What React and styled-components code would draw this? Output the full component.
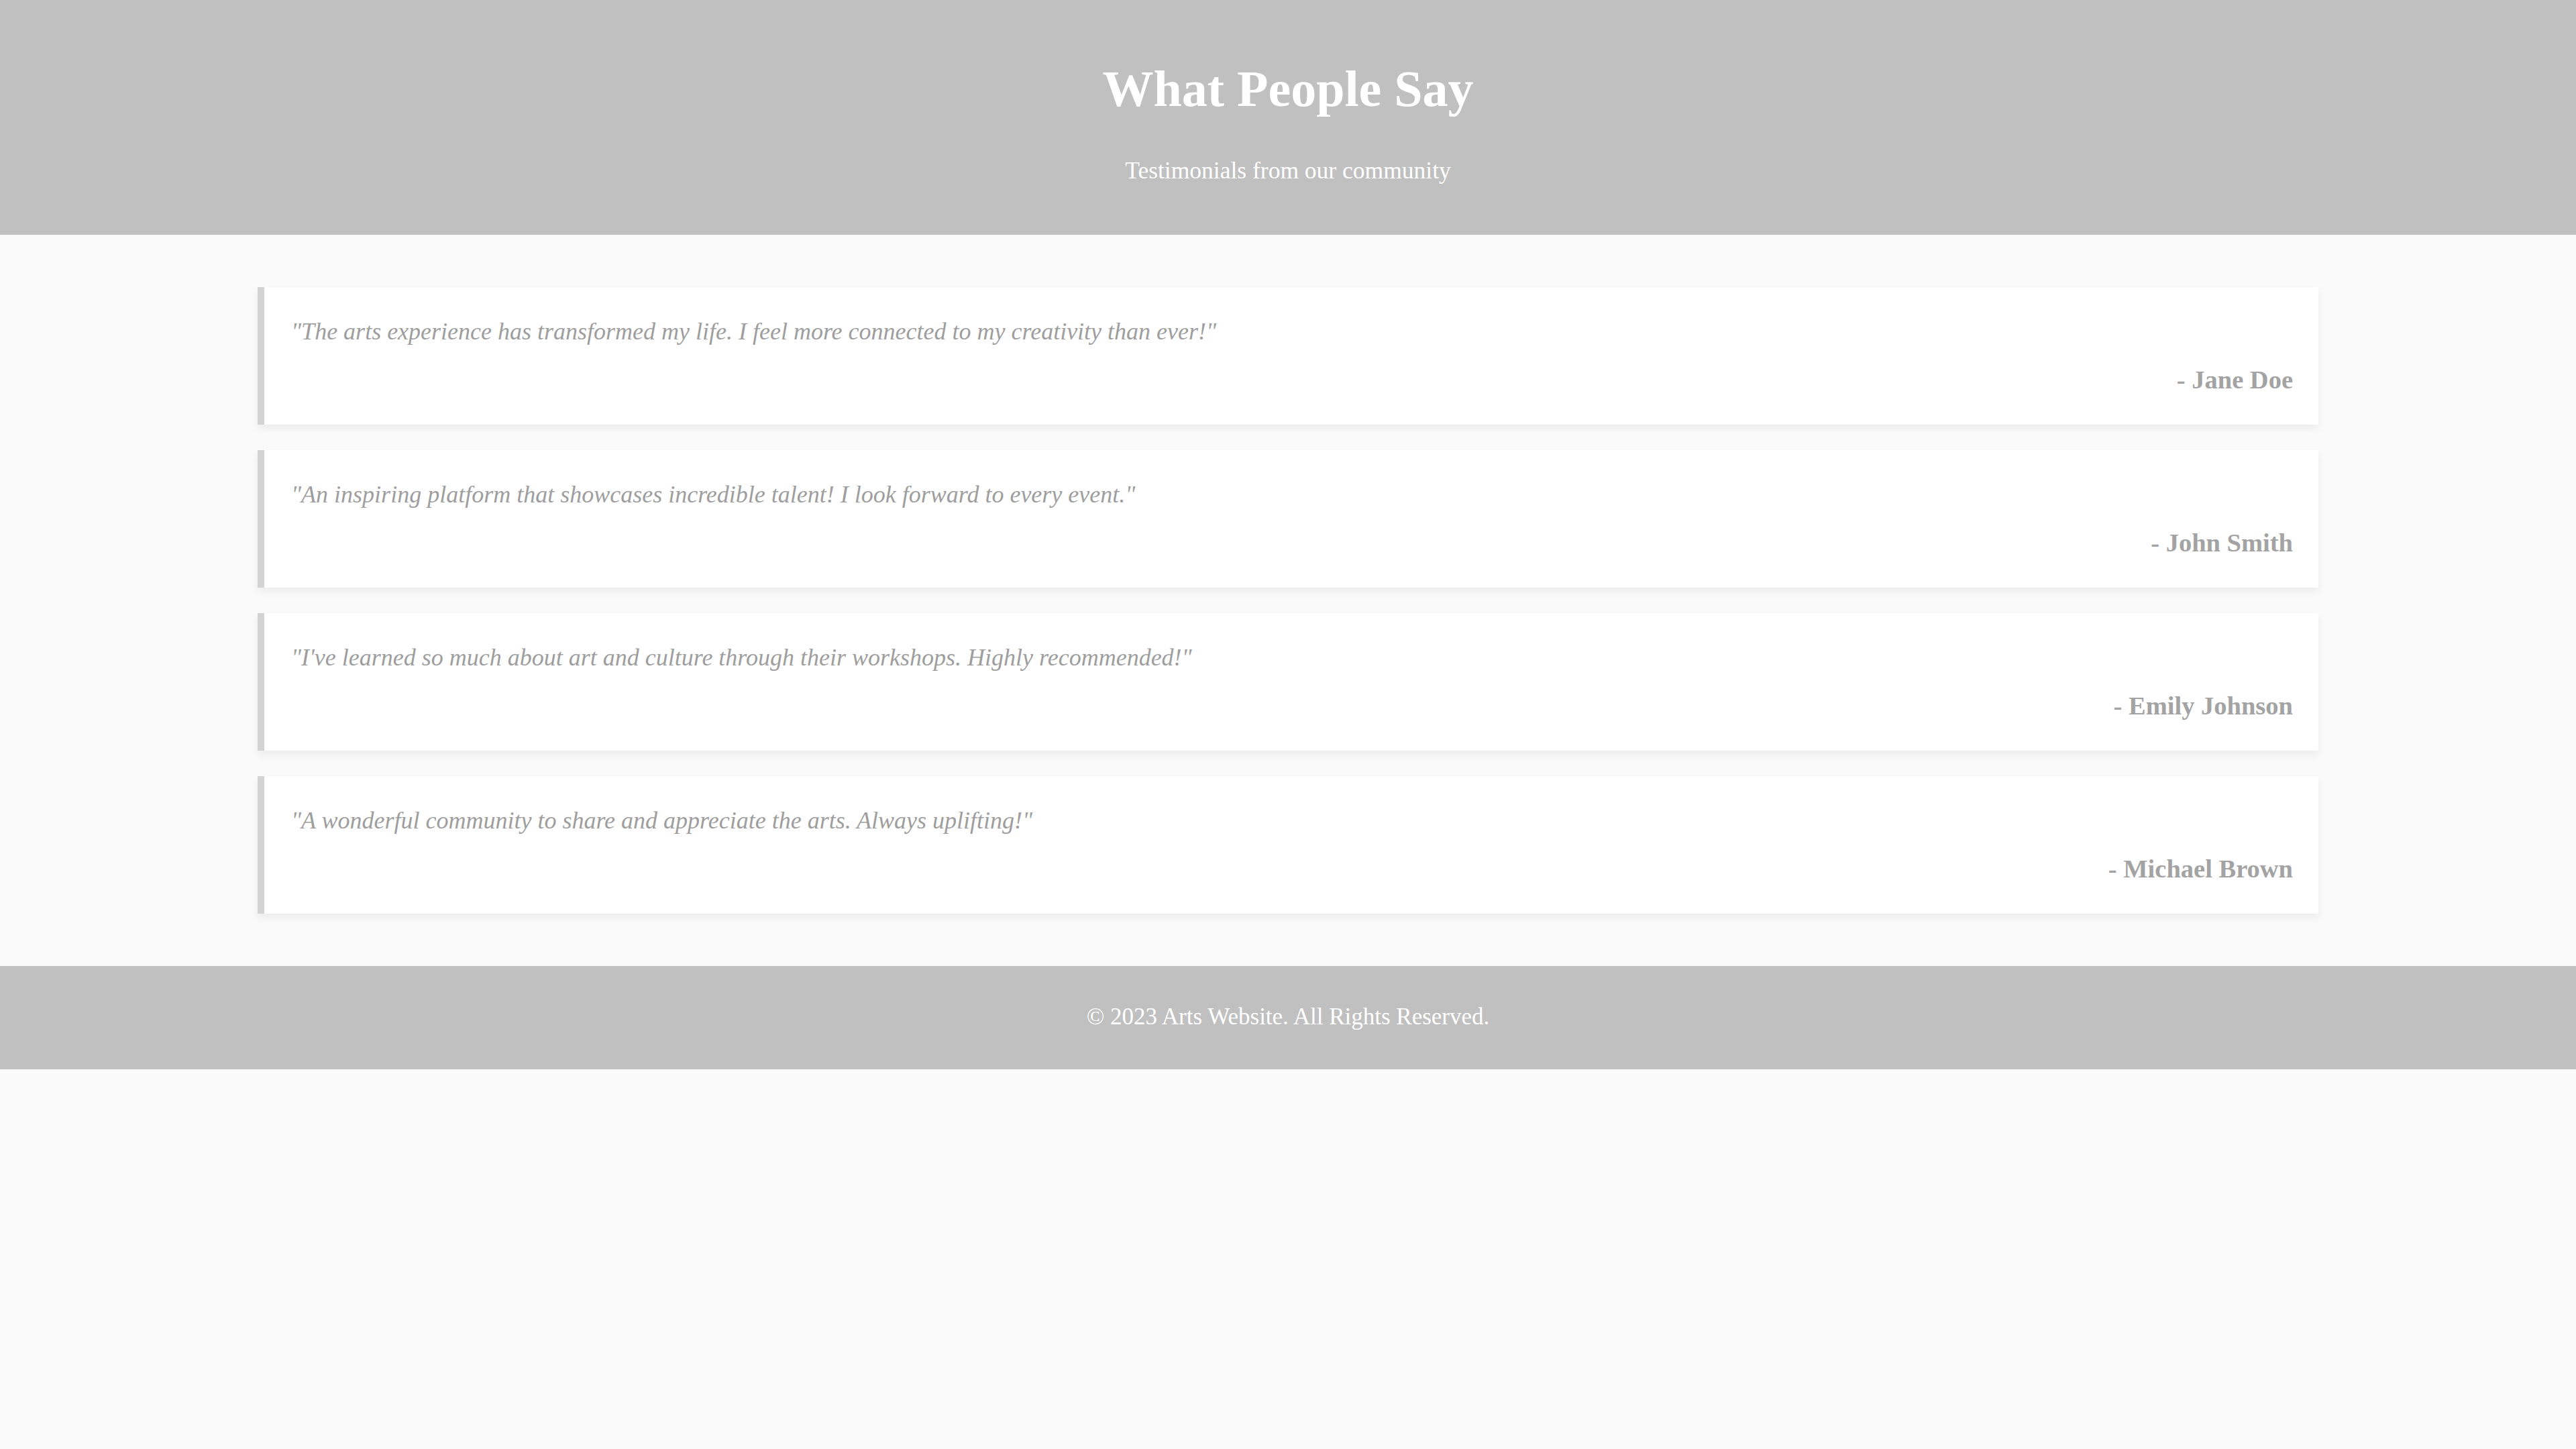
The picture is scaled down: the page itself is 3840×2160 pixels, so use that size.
import styled, { createGlobalStyle } from "styled-components";

const testimonials = [
  {
    quote: "\"The arts experience has transformed my life. I feel more connected to my creativity than ever!\"",
    author: "Jane Doe",
  },
  {
    quote: "\"An inspiring platform that showcases incredible talent! I look forward to every event.\"",
    author: "John Smith",
  },
  {
    quote: "\"I've learned so much about art and culture through their workshops. Highly recommended!\"",
    author: "Emily Johnson",
  },
  {
    quote: "\"A wonderful community to share and appreciate the arts. Always uplifting!\"",
    author: "Michael Brown",
  },
];

export default function App() {
  return (
    <>
      <GlobalStyle />
      <Header>
        <Title>What People Say</Title>
        <Subtitle>Testimonials from our community</Subtitle>
      </Header>
      <Main>
        {testimonials.map((t, i) => (
          <Card key={`testimonial-${i}`}>
            <Quote>{t.quote}</Quote>
            <Author>- {t.author}</Author>
          </Card>
        ))}
      </Main>
      <Footer>
        <FooterText>© 2023 Arts Website. All Rights Reserved.</FooterText>
      </Footer>
    </>
  );
}

const GlobalStyle = createGlobalStyle`
  html, body {
    margin: 0;
    padding: 0;
    background: #fafafa;
    font-family: "Liberation Serif", "DejaVu Serif", serif;
  }
`;

const Header = styled.header`
  background: #c0c0c0;
  color: #ffffff;
  text-align: center;
  padding: 89px 0 76px;
  display: flex;
  flex-direction: column;
  align-items: center;
`;

const Title = styled.h1`
  margin: 0;
  font-size: 76px;
  line-height: 87px;
  font-weight: bold;
`;

const Subtitle = styled.p`
  margin: 58px 0 0;
  font-size: 35.5px;
  line-height: 40px;
`;

const Main = styled.main`
  padding: 78px 384px 78px;
  display: flex;
  flex-direction: column;
  gap: 38px;
`;

const Card = styled.div`
  background: #ffffff;
  border-left: 10px solid #d3d3d3;
  padding: 46px 38px 45px 40px;
  box-shadow: 0 6px 12px rgba(0, 0, 0, 0.06);
  display: flex;
  flex-direction: column;
  gap: 29px;
`;

const Quote = styled.p`
  margin: 0;
  font-size: 36px;
  line-height: 41px;
  font-style: italic;
  color: #9e9e9e;
`;

const Author = styled.p`
  margin: 0;
  font-size: 38.5px;
  line-height: 44px;
  font-weight: bold;
  color: #a3a3a3;
  text-align: right;
`;

const Footer = styled.footer`
  background: #c0c0c0;
  text-align: center;
  padding: 56px 0 58px;
`;

const FooterText = styled.p`
  margin: 0;
  font-size: 35px;
  line-height: 40px;
  color: #ffffff;
`;
